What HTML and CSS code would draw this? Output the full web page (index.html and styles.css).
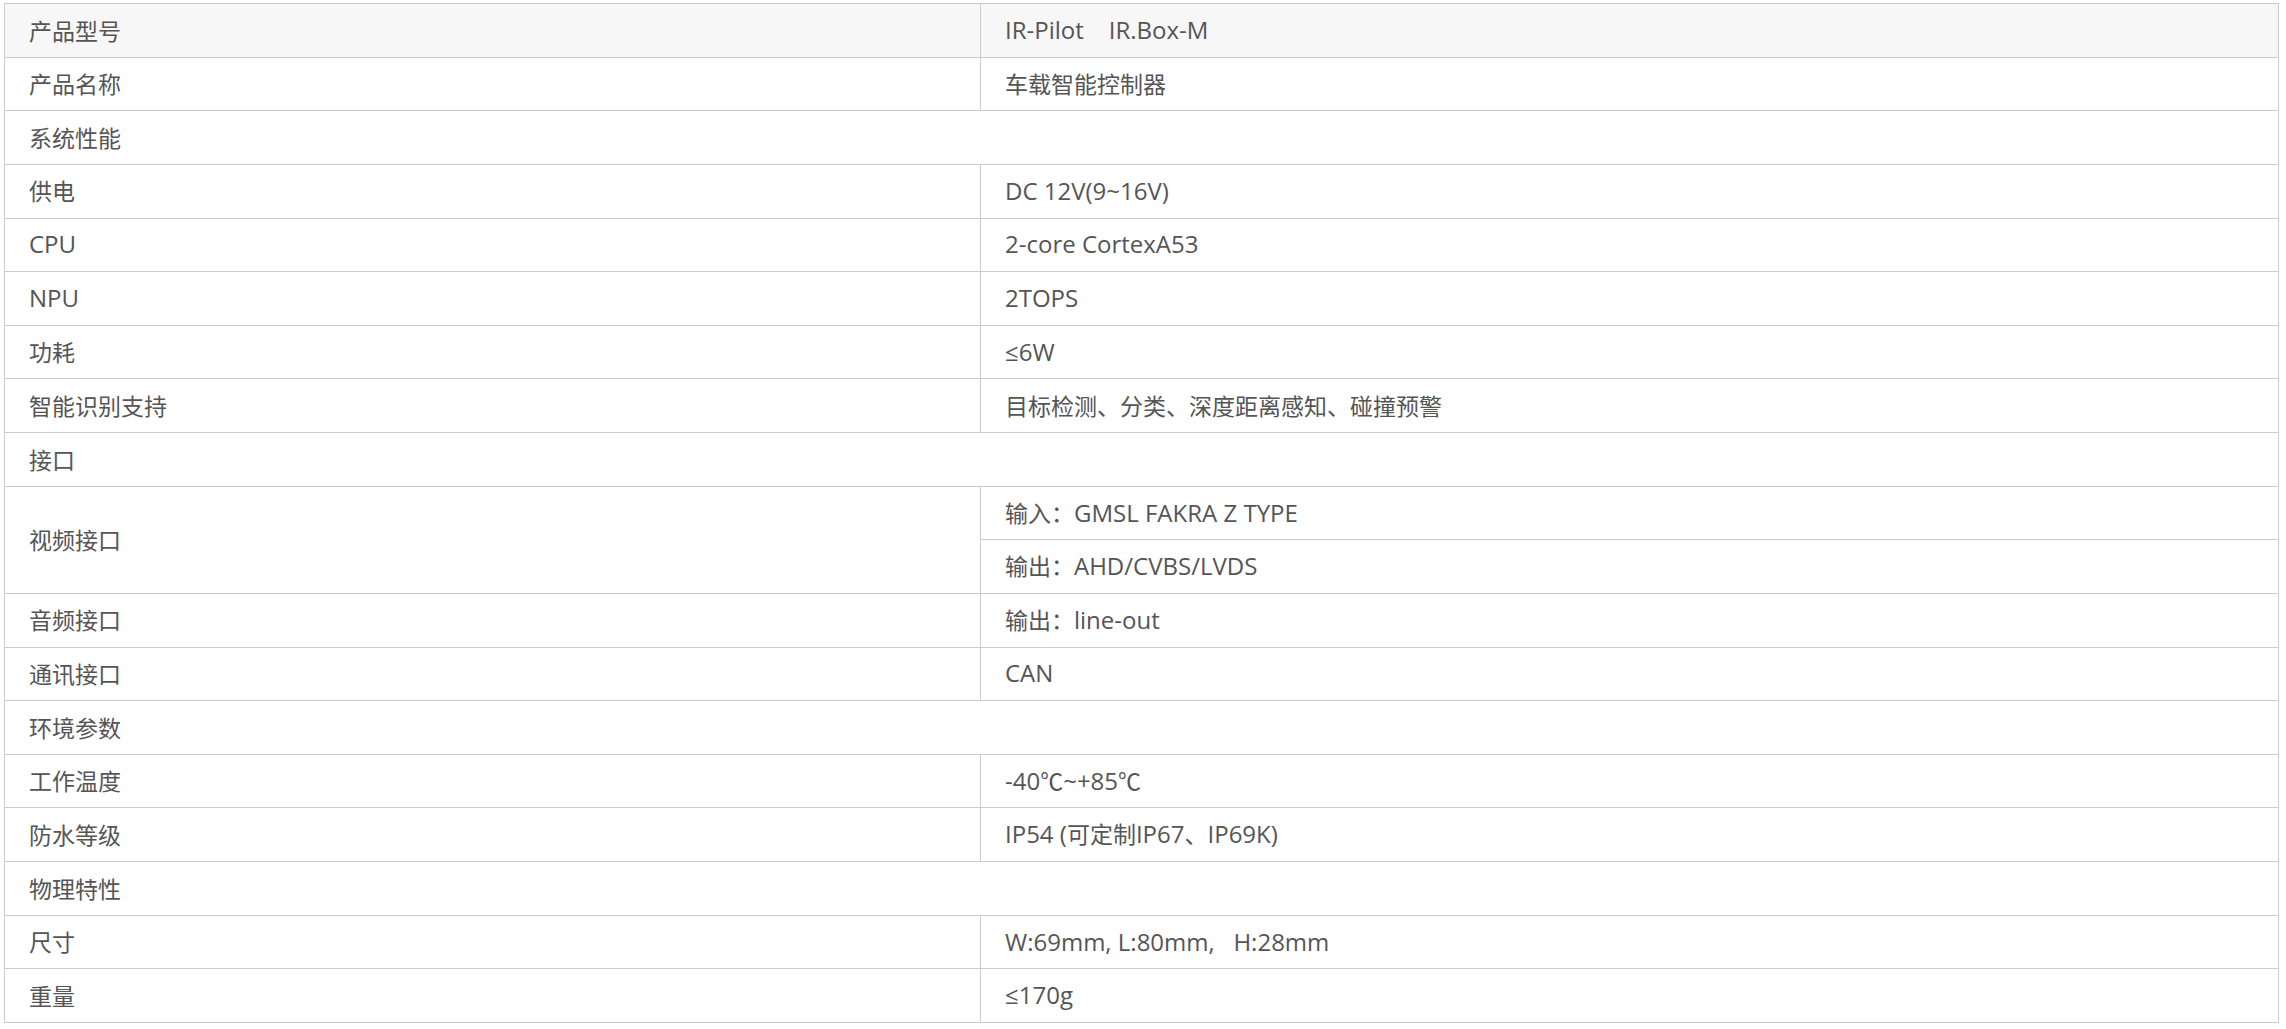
FILE: index.html
```html
<!DOCTYPE html>
<html lang="zh-CN">
<head>
<meta charset="utf-8">
<title>产品参数</title>
<link rel="stylesheet" href="styles.css">
</head>
<body>
<table class="spec">
  <colgroup><col class="c1"><col class="c2"></colgroup>
  <tbody>
    <tr class="head"><td>产品型号</td><td><span class="en">IR-Pilot&nbsp;&nbsp;&nbsp; IR.Box-M</span></td></tr>
    <tr><td>产品名称</td><td>车载智能控制器</td></tr>
    <tr><td colspan="2">系统性能</td></tr>
    <tr><td>供电</td><td><span class="en">DC 12V(9~16V)</span></td></tr>
    <tr><td><span class="en">CPU</span></td><td><span class="en">2-core CortexA53</span></td></tr>
    <tr><td><span class="en">NPU</span></td><td><span class="en">2TOPS</span></td></tr>
    <tr><td>功耗</td><td><span class="en">≤6W</span></td></tr>
    <tr><td>智能识别支持</td><td>目标检测、分类、深度距离感知、碰撞预警</td></tr>
    <tr><td colspan="2">接口</td></tr>
    <tr><td rowspan="2">视频接口</td><td>输入：<span class="en">GMSL FAKRA Z TYPE</span></td></tr>
    <tr><td>输出：<span class="en">AHD/CVBS/LVDS</span></td></tr>
    <tr><td>音频接口</td><td>输出：<span class="en">line-out</span></td></tr>
    <tr><td>通讯接口</td><td><span class="en">CAN</span></td></tr>
    <tr><td colspan="2">环境参数</td></tr>
    <tr><td>工作温度</td><td><span class="en">-40</span>℃<span class="en">~+85</span>℃</td></tr>
    <tr><td>防水等级</td><td><span class="en">IP54 (</span>可定制<span class="en">IP67</span>、<span class="en">IP69K)</span></td></tr>
    <tr><td colspan="2">物理特性</td></tr>
    <tr><td>尺寸</td><td><span class="en">W:69mm, L:80mm,&nbsp;&nbsp; H:28mm</span></td></tr>
    <tr><td>重量</td><td><span class="en">≤170g</span></td></tr>
  </tbody>
</table>
</body>
</html>
```
FILE: styles.css
```css
html, body {
  margin: 0;
  padding: 0;
  background: #fff;
}
body {
  padding: 3px 0 0 4px;
  font-family: "Noto Sans CJK SC", sans-serif;
  color: #555;
}
.spec {
  width: 2275px;
  border-collapse: collapse;
  table-layout: fixed;
  font-size: 23px;
}
.c1 { width: 976px; }
.spec td {
  border: 1px solid #ccc;
  height: 53.63px;
  padding: 0 24px;
  box-sizing: border-box;
  vertical-align: middle;
  line-height: 1.2;
  white-space: nowrap;
}
.spec .en {
  font-family: "Open Sans", "Noto Sans CJK SC", sans-serif;
  font-size: 24px;
}
.spec .head td {
  background: #f7f7f7;
}
```
